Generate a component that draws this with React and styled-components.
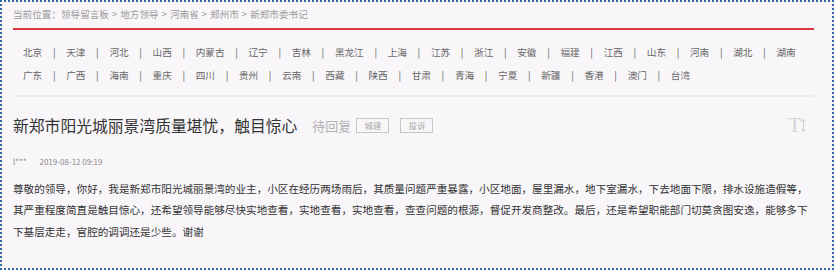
import React from "react";
import styled, { createGlobalStyle } from "styled-components";

const GlobalStyle = createGlobalStyle`
  html, body { margin: 0; padding: 0; background: #ffffff; }
  * { box-sizing: border-box; }
`;

const Frame = styled.div`
  width: 834px;
  height: 270px;
  border: 2px dotted #2f64a6;
  background: #f8f6f9;
  padding: 0 18px 0 11px;
  overflow: hidden;
  font-family: "Noto Sans CJK SC", "Noto Sans", sans-serif;
`;

const Breadcrumb = styled.div`
  height: 28px;
  line-height: 24px;
  font-size: 9.6px;
  color: #9a9a9a;
  border-bottom: 2px solid #e2343e;
  white-space: nowrap;
`;

const Crumb = styled.span`
  color: #9a9a9a;
`;

const Arrow = styled.span`
  margin: 0 3px;
`;

const Provinces = styled.div`
  padding: 11px 0 9px 10px;
  border-bottom: 2px solid #ecebee;
`;

const ProvinceRow = styled.div`
  display: flex;
  align-items: center;
  height: 22.5px;
  font-size: 9.6px;
  color: #666666;
  white-space: nowrap;
`;

const Province = styled.span`
  color: #666666;
`;

const Sep = styled.span`
  display: inline-block;
  width: 24px;
  text-align: center;
  color: #555555;
`;

const TitleRow = styled.div`
  display: flex;
  align-items: center;
  height: 30px;
  margin-top: 13px;
`;

const Title = styled.h1`
  margin: 0;
  font-size: 15.8px;
  font-weight: normal;
  color: #333333;
  white-space: nowrap;
`;

const Status = styled.span`
  margin-left: 15px;
  font-size: 13px;
  color: #b2b2b2;
  white-space: nowrap;
`;

const Tag = styled.span`
  display: inline-block;
  height: 15px;
  line-height: 13px;
  padding: 0 7px;
  margin-left: ${(p) => p.$gap}px;
  border: 1px solid #c6c6c6;
  font-size: 8.5px;
  color: #a8a8a8;
  white-space: nowrap;
`;

const FontTool = styled.div`
  margin-left: auto;
  margin-right: 8px;
  display: flex;
  align-items: center;
  color: #d2d2d2;
`;

const BigT = styled.span`
  font-family: "Liberation Serif", serif;
  font-size: 21px;
  line-height: 1;
  color: #d4d4d4;
`;

const Meta = styled.div`
  display: flex;
  align-items: center;
  height: 16px;
  margin-top: 13px;
  font-size: 8px;
  color: #8a8a8a;
`;

const Author = styled.span`
  margin-right: 13px;
`;

const Body = styled.p`
  margin: 8.5px 0 0;
  font-size: 10.6px;
  line-height: 21.5px;
  color: #333333;
`;

const row1 = ["北京", "天津", "河北", "山西", "内蒙古", "辽宁", "吉林", "黑龙江", "上海", "江苏", "浙江", "安徽", "福建", "江西", "山东", "河南", "湖北", "湖南"];
const row2 = ["广东", "广西", "海南", "重庆", "四川", "贵州", "云南", "西藏", "陕西", "甘肃", "青海", "宁夏", "新疆", "香港", "澳门", "台湾"];

const crumbs = ["领导留言板", "地方领导", "河南省", "郑州市", "新郑市委书记"];

function Row({ items }) {
  return (
    <ProvinceRow>
      {items.map((p, i) => (
        <React.Fragment key={p}>
          {i > 0 && <Sep>|</Sep>}
          <Province>{p}</Province>
        </React.Fragment>
      ))}
    </ProvinceRow>
  );
}

export default function App() {
  return (
    <>
      <GlobalStyle />
      <Frame>
        <Breadcrumb>
          当前位置：
          {crumbs.map((c, i) => (
            <React.Fragment key={c}>
              {i > 0 && <Arrow>&gt;</Arrow>}
              <Crumb>{c}</Crumb>
            </React.Fragment>
          ))}
        </Breadcrumb>
        <Provinces>
          <Row items={row1} />
          <Row items={row2} />
        </Provinces>
        <TitleRow>
          <Title>新郑市阳光城丽景湾质量堪忧，触目惊心</Title>
          <Status>待回复</Status>
          <Tag $gap={5}>城建</Tag>
          <Tag $gap={11}>投诉</Tag>
          <FontTool>
            <BigT>T</BigT>
            <svg width="5" height="15" viewBox="0 0 5 15">
              <path d="M2.5 1 L2.5 14" stroke="#cfcfcf" strokeWidth="1" />
              <path d="M0.5 3.5 L2.5 1 L4.5 3.5" fill="none" stroke="#cfcfcf" strokeWidth="1" />
              <path d="M0.5 11.5 L2.5 14 L4.5 11.5" fill="none" stroke="#cfcfcf" strokeWidth="1" />
            </svg>
          </FontTool>
        </TitleRow>
        <Meta>
          <Author>l***</Author>
          <span>2019-08-12 09:19</span>
        </Meta>
        <Body>
          尊敬的领导，你好，我是新郑市阳光城丽景湾的业主，小区在经历两场雨后，其质量问题严重暴露，小区地面，屋里漏水，地下室漏水，下去地面下限，排水设施造假等，其严重程度简直是触目惊心，还希望领导能够尽快实地查看，实地查看，实地查看，查查问题的根源，督促开发商整改。最后，还是希望职能部门切莫贪图安逸，能够多下下基层走走，官腔的调调还是少些。谢谢
        </Body>
      </Frame>
    </>
  );
}
